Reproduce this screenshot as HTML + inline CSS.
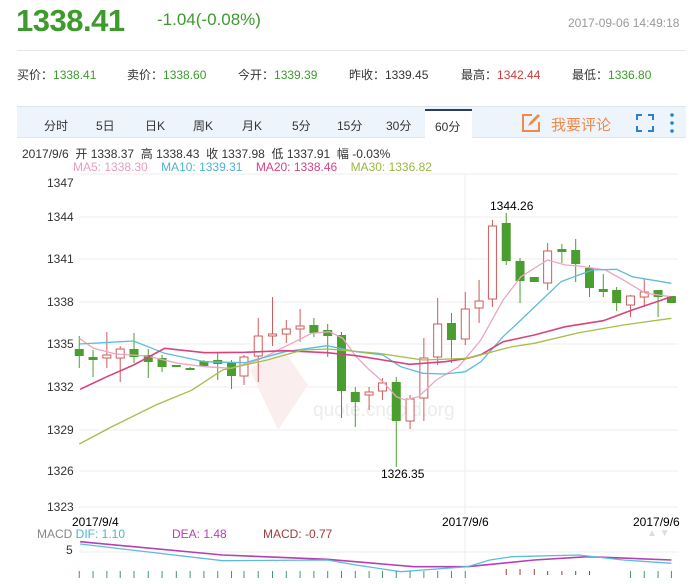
<!DOCTYPE html>
<html><head><meta charset="utf-8"><style>
*{margin:0;padding:0;box-sizing:border-box}
body{width:698px;height:584px;background:#fff;font-family:"Liberation Sans","Noto Sans CJK SC",sans-serif;position:relative;overflow:hidden;color:#333}
.a{position:absolute;white-space:nowrap}
.g{color:#3d9a2d}.r{color:#d03a3a}
</style></head><body>
<div class="a g" style="left:16px;top:3px;font-size:31px;font-weight:bold;letter-spacing:-0.5px">1338.41</div>
<div class="a g" style="left:157px;top:10px;font-size:17px">-1.04(-0.08%)</div>
<div class="a" style="left:568px;top:16px;font-size:12px;color:#999">2017-09-06 14:49:18</div>
<div class="a" style="left:17px;top:50px;width:669px;height:1px;background:#e6e6e6"></div>
<div class="a" style="left:17px;top:66px;font-size:12px">买价：<span class="g">1338.41</span></div>
<div class="a" style="left:127px;top:66px;font-size:12px">卖价：<span class="g">1338.60</span></div>
<div class="a" style="left:238px;top:66px;font-size:12px">今开：<span class="g">1339.39</span></div>
<div class="a" style="left:349px;top:66px;font-size:12px">昨收：1339.45</div>
<div class="a" style="left:461px;top:66px;font-size:12px">最高：<span class="r">1342.44</span></div>
<div class="a" style="left:572px;top:66px;font-size:12px">最低：<span class="g">1336.80</span></div>
<div class="a" style="left:17px;top:106px;width:669px;height:32px;background:#eef4fb;border-top:1px solid #dde6f0;border-bottom:1px solid #dde6f0"></div>
<div class="a" style="left:425px;top:109px;width:47px;height:30px;background:#fff;border-top:2px solid #2a3d5c"></div>
<div class="a" style="left:44px;top:117px;font-size:12px;color:#333">分时</div>
<div class="a" style="left:96px;top:117px;font-size:12px">5日</div>
<div class="a" style="left:145px;top:117px;font-size:12px">日K</div>
<div class="a" style="left:193px;top:117px;font-size:12px">周K</div>
<div class="a" style="left:242px;top:117px;font-size:12px">月K</div>
<div class="a" style="left:292px;top:117px;font-size:12px">5分</div>
<div class="a" style="left:337px;top:117px;font-size:12px">15分</div>
<div class="a" style="left:386px;top:117px;font-size:12px">30分</div>
<div class="a" style="left:435px;top:118px;font-size:12px">60分</div>
<svg class="a" style="left:520px;top:112px" width="22" height="22" viewBox="0 0 22 22"><path d="M12 3H3v16h16v-9" fill="none" stroke="#f08a4b" stroke-width="2"/><path d="M8 14l2-4 8-8 2 2-8 8z" fill="#f08a4b"/></svg>
<div class="a" style="left:551px;top:114px;font-size:15px;color:#f08a4b">我要评论</div>
<svg class="a" style="left:636px;top:114px" width="18" height="18" viewBox="0 0 18 18" fill="none" stroke="#2f7fd0" stroke-width="2"><path d="M1 6V1h5M12 1h5v5M17 12v5h-5M6 17H1v-5"/></svg>
<svg class="a" style="left:669px;top:112px" width="6" height="22"><circle cx="3" cy="3" r="1.8" fill="#2f7fd0"/><circle cx="3" cy="11" r="1.8" fill="#2f7fd0"/><circle cx="3" cy="19" r="1.8" fill="#2f7fd0"/></svg>
<div class="a" style="left:22px;top:145px;font-size:12px;color:#333">2017/9/6 &nbsp;开 1338.37 &nbsp;高 1338.43 &nbsp;收 1337.98 &nbsp;低 1337.91 &nbsp;幅 -0.03%</div>
<div class="a" style="left:73px;top:160px;font-size:12px"><span style="color:#e99cc0">MA5: 1338.30</span>&nbsp;&nbsp;&nbsp;&nbsp;<span style="color:#4db3d6">MA10: 1339.31</span>&nbsp;&nbsp;&nbsp;&nbsp;<span style="color:#d8437f">MA20: 1338.46</span>&nbsp;&nbsp;&nbsp;&nbsp;<span style="color:#9ab83c">MA30: 1336.82</span></div>
<div class="a" style="left:47px;top:176px;font-size:12px">1347</div>
<div class="a" style="left:47px;top:210px;font-size:12px">1344</div>
<div class="a" style="left:47px;top:252px;font-size:12px">1341</div>
<div class="a" style="left:47px;top:295px;font-size:12px">1338</div>
<div class="a" style="left:47px;top:337px;font-size:12px">1335</div>
<div class="a" style="left:47px;top:380px;font-size:12px">1332</div>
<div class="a" style="left:47px;top:423px;font-size:12px">1329</div>
<div class="a" style="left:47px;top:464px;font-size:12px">1326</div>
<div class="a" style="left:47px;top:500px;font-size:12px">1323</div>
<div class="a" style="left:313px;top:400px;font-size:19px;color:#ececec">quote.cngold.org</div>
<svg class="a" style="left:0;top:0" width="698" height="584" id="s"></svg>
<div class="a" style="left:490px;top:199px;font-size:12px;color:#000">1344.26</div>
<div class="a" style="left:381px;top:467px;font-size:12px;color:#000">1326.35</div>
<div class="a" style="left:72px;top:515px;font-size:12px;color:#000">2017/9/4</div>
<div class="a" style="left:442px;top:515px;font-size:12px;color:#000">2017/9/6</div>
<div class="a" style="left:633px;top:515px;font-size:12px;color:#000">2017/9/6</div>
<div class="a" style="left:37px;top:527px;font-size:12px;color:#888">MACD <span style="color:#4db3d6">DIF: 1.10</span></div>
<div class="a" style="left:172px;top:527px;font-size:12px;color:#b540b0">DEA: 1.48</div>
<div class="a" style="left:263px;top:527px;font-size:12px;color:#a33a3a">MACD: -0.77</div>
<div class="a" style="left:66px;top:543px;font-size:12px">5</div>
<div class="a" style="left:647px;top:528px;font-size:10px;color:#ddd">▲ ▼</div>
<script>
var s=document.getElementById('s'),h='';
function L(x1,y1,x2,y2,c,w){h+='<line x1="'+x1+'" y1="'+y1+'" x2="'+x2+'" y2="'+y2+'" stroke="'+c+'" stroke-width="'+(w||1)+'"/>';}
[174,217,259,302,344,387,430,471,507].forEach(function(y){L(79,y,678,y,'#eee');});
L(465,175,465,584,'#eee');L(79,552,678,552,'#eee');
h+='<path d="M250 370l30-25 28 40-30 45z" fill="#fbeeee"/>';
var C=[['g',349,356,336,368],['g',357,360,350,377],['r',355,358,332,368],['r',349,358,346,382],['g',349,357,333,363],['g',355,362,349,378],['g',358,367,355,372],['g',365,367,365,367],['g',368,369,367,370],['g',361,366,360,367],['g',360,364,353,380],['g',363,376,360,389],['r',357,376,355,385],['r',336,356,318,382],['r',334,336,297,346],['r',329,334,320,343],['r',326,329,309,342],['g',325,333,318,337],['g',330,336,324,357],['g',335,391,332,418],['g',392,402,387,427],['r',392,395,387,410],['r',383,391,378,400],['g',382,421,377,467],['r',399,421,395,429],['r',358,398,338,421],['r',324,357,298,365],['g',323,340,313,363],['r',309,339,292,345],['r',301,308,280,323],['r',226,299,220,307],['g',223,261,213,265],['g',261,281,258,303],['g',277,282,277,282],['r',251,283,243,290],['g',249,252,244,263],['g',250,264,239,282],['g',268,288,265,297],['g',289,292,274,297],['g',290,303,287,311],['r',296,305,295,317],['r',292,297,279,307],['g',290,297,290,317],['g',296,303,296,303]];
var Z=[178,209,240,270,301,333,364,396,427,458,489,520,548,580,612,643,674,705,736,767,798,829,859,890,921,952,983,1014,1045,1076,1106,1137,1168,1200,1230,1262,1293,1324,1355,1385,1416,1447,1478,1508];
C.forEach(function(c,i){var x=Z[i]/2.246,col=c[0]=='g'?'#4a9e2f':'#d05a5a';L(x,c[3],x,c[4],col);
if(c[0]=='g')h+='<rect x="'+(x-4.5)+'" y="'+c[1]+'" width="9" height="'+Math.max(2,c[2]-c[1])+'" fill="'+col+'"/>';
else h+='<rect x="'+(x-4)+'" y="'+c[1]+'" width="8" height="'+Math.max(1.5,c[2]-c[1])+'" fill="#fff" stroke="'+col+'"/>';});
function P(pts,oy,c,w){var d=pts.map(function(p){return (p[0]/2.246).toFixed(1)+','+(oy+p[1]/3).toFixed(1)}).join(' ');h+='<polyline points="'+d+'" fill="none" stroke="'+c+'" stroke-width="'+w+'"/>';}
P([[178,475],[210,505],[260,522],[330,528],[400,550],[460,560],[520,565],[580,540],[640,500],[700,460],[740,455],[770,475],[800,530],[830,570],[860,605],[890,650],[910,660],[940,650],[980,600],[1030,560],[1080,480],[1130,360],[1170,290],[1230,240],[1270,255],[1300,258],[1360,270],[1400,300],[1450,340],[1508,350]],180,'#eba6c4',1.3);
P([[178,492],[300,483],[370,520],[460,545],[550,548],[640,515],[735,497],[800,515],[860,525],[900,560],[950,580],[1000,582],[1045,575],[1080,545],[1130,470],[1170,420],[1260,305],[1330,270],[1385,268],[1420,290],[1508,310]],180,'#5bbcdc',1.3);
P([[180,628],[240,590],[300,555],[370,505],[460,518],[550,517],[640,512],[735,518],[800,527],[860,540],[920,553],[1000,545],[1050,535],[1080,524],[1130,485],[1200,465],[1270,440],[1355,422],[1420,390],[1508,350]],180,'#d8437f',1.6);
P([[178,792],[250,741],[350,675],[430,631],[500,570],[600,540],[680,510],[735,507],[850,520],[950,540],[1050,535],[1150,500],[1200,490],[1300,458],[1400,435],[1508,415]],180,'#a3bf48',1.3);
P([[180,455],[500,495],[735,508],[930,530],[1050,530],[1200,510],[1320,500],[1508,510]],390,'#b540b0',1.6);
P([[180,462],[500,512],[735,510],[800,525],[900,545],[950,540],[1050,530],[1100,510],[1150,500],[1300,495],[1400,510],[1508,520]],390,'#5bbcdc',1.3);
Z.forEach(function(z,i){var x=z/2.246;if(i>=31&&i<=37)L(x,575-(i<34?6:4),x,575,'#a33a3a');else if(i<29||i>39)L(x,571,x,578,'#3a9a6a');});
s.innerHTML=h;
</script>
</body></html>
